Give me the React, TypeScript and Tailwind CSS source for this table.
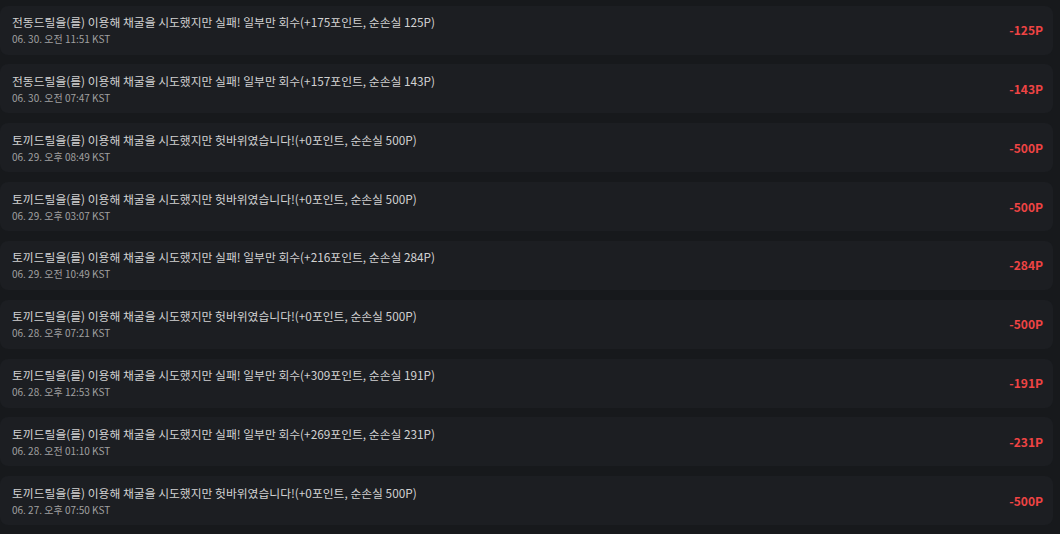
const rows = [
  { text: "전동드릴을(를) 이용해 채굴을 시도했지만 실패! 일부만 회수(+175포인트, 순손실 125P)", date: "06. 30. 오전 11:51 KST", amount: "-125P" },
  { text: "전동드릴을(를) 이용해 채굴을 시도했지만 실패! 일부만 회수(+157포인트, 순손실 143P)", date: "06. 30. 오전 07:47 KST", amount: "-143P" },
  { text: "토끼드릴을(를) 이용해 채굴을 시도했지만 헛바위였습니다!(+0포인트, 순손실 500P)", date: "06. 29. 오후 08:49 KST", amount: "-500P" },
  { text: "토끼드릴을(를) 이용해 채굴을 시도했지만 헛바위였습니다!(+0포인트, 순손실 500P)", date: "06. 29. 오후 03:07 KST", amount: "-500P" },
  { text: "토끼드릴을(를) 이용해 채굴을 시도했지만 실패! 일부만 회수(+216포인트, 순손실 284P)", date: "06. 29. 오전 10:49 KST", amount: "-284P" },
  { text: "토끼드릴을(를) 이용해 채굴을 시도했지만 헛바위였습니다!(+0포인트, 순손실 500P)", date: "06. 28. 오후 07:21 KST", amount: "-500P" },
  { text: "토끼드릴을(를) 이용해 채굴을 시도했지만 실패! 일부만 회수(+309포인트, 순손실 191P)", date: "06. 28. 오후 12:53 KST", amount: "-191P" },
  { text: "토끼드릴을(를) 이용해 채굴을 시도했지만 실패! 일부만 회수(+269포인트, 순손실 231P)", date: "06. 28. 오전 01:10 KST", amount: "-231P" },
  { text: "토끼드릴을(를) 이용해 채굴을 시도했지만 헛바위였습니다!(+0포인트, 순손실 500P)", date: "06. 27. 오후 07:50 KST", amount: "-500P" },
];

export default function App() {
  return (
    <div
      className="h-[534px] w-[1060px] overflow-hidden bg-[#17191c] pr-[7px] pt-[5.5px]"
      style={{ fontFamily: '"Noto Sans CJK KR", "Noto Sans", sans-serif' }}
    >
      <ul className="flex flex-col gap-[9.85px]">
        {rows.map((row, i) => (
          <li
            key={i}
            className="flex h-[49px] items-center justify-between rounded-lg bg-[#1c1e22] pl-3 pr-2.5"
          >
            <div className="flex flex-col">
              <p className="text-[11.8px] leading-[18px] text-[#d2d2d2]">{row.text}</p>
              <p className="text-[10px] leading-[16px] text-[#a0a0a0]">{row.date}</p>
            </div>
            <span className="text-[12px] font-bold text-[#ef4444]">{row.amount}</span>
          </li>
        ))}
      </ul>
    </div>
  );
}
